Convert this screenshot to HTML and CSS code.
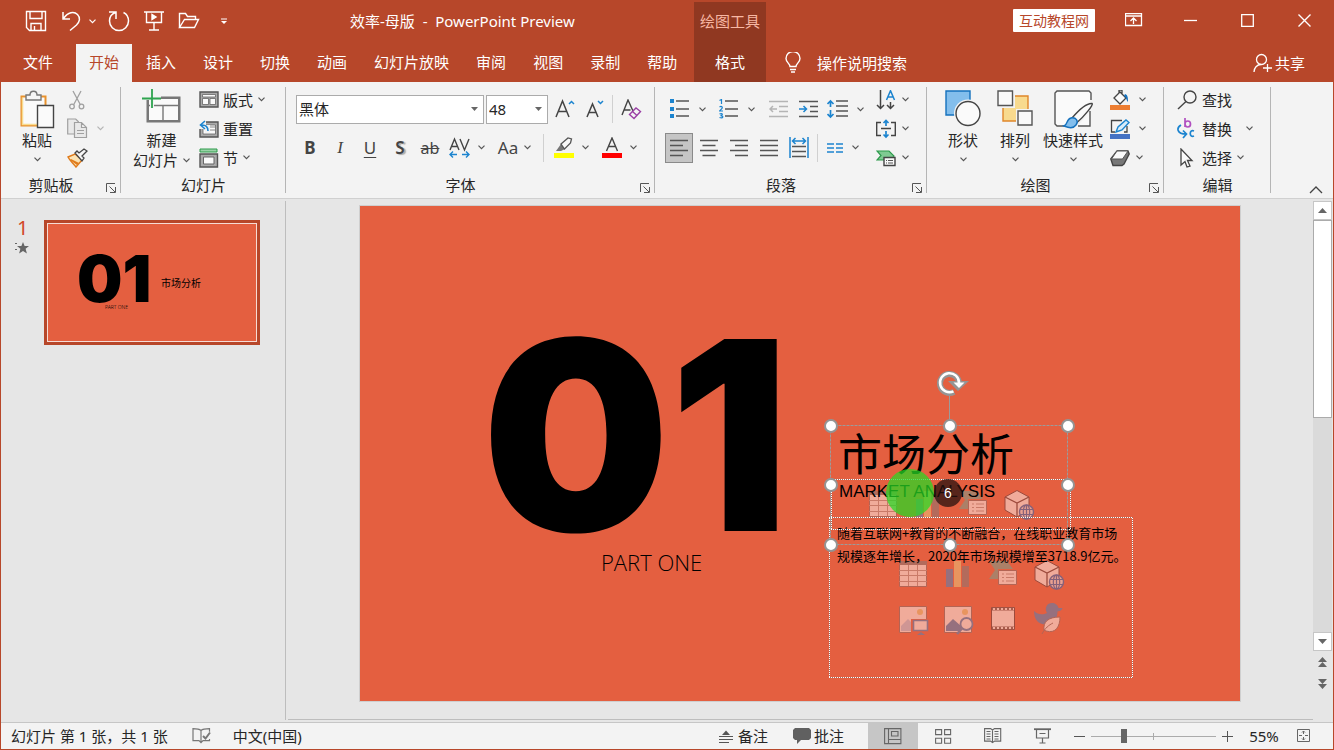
FILE: index.html
```html
<!DOCTYPE html>
<html lang="zh-CN">
<head>
<meta charset="utf-8">
<title>效率-母版 - PowerPoint Preview</title>
<link rel="stylesheet" href="styles.css">
</head>
<body>
<svg class="defs" aria-hidden="true">
  <symbol id="chev" viewBox="0 0 7 5"><path d="M.5 .7 3.5 3.7 6.5 .7" fill="none" stroke="currentColor" stroke-width="1.2"/></symbol>
  <symbol id="launch" viewBox="0 0 10 10"><path d="M.5 9V.5H9M3.5 3.5 9 9M9.5 4v5.5H4" fill="none" stroke="#555" stroke-width="1"/></symbol>
  <symbol id="content-icons" viewBox="0 0 165 30" overflow="visible">
    <path d="M.5 1.500h27v25h-27z" fill="#f0ab9a" stroke="#b36454"/>
    <path d="M0 1h28v4H0z" fill="#b36b5c"/>
    <path d="M0 10.500h28M0 15.500h28M0 21.500h28M9.500 5v21M18.500 5v21" stroke="#c97a68"/>
    <path d="M47 9h7v18h-7z" fill="#96707e"/><path d="M55 1h7v26h-7z" fill="#e8955f"/><path d="M63 6h7v21h-7z" fill="#b36b5c"/>
    <path d="M90 1h18l6 8H99v10h-9l6-9z" fill="#ab8068"/>
    <path d="M99.500 10.500h18v14h-18z" fill="#f0ab9a" stroke="#b36454"/>
    <path d="M103 14h2m2 0h8M103 17.500h2m2 0h8M103 21h2m2 0h8" stroke="#c97a68"/>
    <path d="M136 7 148 .5 160 7v13l-12 7-12-7z" fill="#f0ab9a" stroke="#9c4a3c"/>
    <path d="M136 7l12 6 12-6M148 13v14" fill="none" stroke="#9c4a3c" stroke-width="1.300"/>
    <circle cx="157.500" cy="22" r="7" fill="#e8a090" stroke="#86617a" stroke-width="1.400"/>
    <ellipse cx="157.500" cy="22" rx="3.200" ry="7" fill="none" stroke="#86617a" stroke-width="1.200"/>
    <path d="M157.500 15v14M151 19.500h13M151 24.500h13" stroke="#86617a" stroke-width="1.200"/>
  </symbol>
</svg>

<header class="header">
  <div class="header-main">
    <div class="title-row">
      <button class="btn" aria-label="保存"><svg width="22" height="22" fill="none" stroke="#fff" stroke-width="1.400"><path d="M1.500 1.500h19v19h-16l-3-3zM5 1.500v7h12v-7M6 20.500v-7h10v7M9.500 16v4"/></svg></button>
      <button class="btn undo" aria-label="撤消"><svg width="20" height="22" fill="none" stroke="#fff" stroke-width="1.500"><path d="M2 2v7h7M2.500 8.500C7 2 13 1 16.500 4.500s2 7.500-1 10.500L9 20.500"/></svg></button>
      <button class="btn undo-more" aria-label="撤消选项"><svg class="chev"><use href="#chev"/></svg></button>
      <button class="btn redo" aria-label="重复"><svg width="22" height="22" fill="none" stroke="#fff" stroke-width="1.500"><path d="M1 2h7v7M7.500 2.500C3 4 1.500 8 1.500 11a9.500 9.500 0 0 0 19 0c0-4-2-7-5-8.500"/></svg></button>
      <button class="btn present" aria-label="从头开始"><svg width="20" height="22" fill="none" stroke="#fff" stroke-width="1.400"><path d="M0 2h20M2.500 2v10.500h15V2M10 12.500v7M5 20h10"/><path d="M8 4.500v5l4-2.500z" fill="#fff"/></svg></button>
      <button class="btn open" aria-label="打开"><svg width="22" height="18" fill="none" stroke="#fff" stroke-width="1.400"><path d="M1.500 15.500V1.500h6l2 3h8v3M1.500 15.500l5-8h14l-4 8z"/></svg></button>
      <button class="btn custom" aria-label="自定义快速访问工具栏"><svg width="7" height="7"><path d="M0 1h6" stroke="#fff"/><path d="M0 3h6L3 6z" fill="#fff"/></svg></button>
      <h1 class="title">效率-母版&nbsp; -&nbsp; PowerPoint Preview</h1>
    </div>
    <nav class="tabs">
      <button class="tab tab-file">文件</button><button class="tab tab-on">开始</button><button class="tab">插入</button><button class="tab">设计</button><button class="tab">切换</button><button class="tab">动画</button><button class="tab">幻灯片放映</button><button class="tab">审阅</button><button class="tab">视图</button><button class="tab">录制</button><button class="tab">帮助</button>
    </nav>
  </div>
  <div class="context"><span class="context-name">绘图工具</span><button class="tab context-tab">格式</button></div>
  <div class="header-side">
    <div class="window-row">
      <span class="badge">互动教程网</span>
      <button class="win" aria-label="功能区显示选项"><svg width="18" height="14" fill="none" stroke="#fff"><path d="M.5 .5h16v12h-16zM.5 3h16M8.500 11V5M5.500 8l3-3 3 3" stroke-width="1.300"/></svg></button>
      <button class="win" aria-label="最小化"><svg width="13" height="13"><path d="M0 6.500h13" stroke="#fff" stroke-width="1.300"/></svg></button>
      <button class="win" aria-label="最大化"><svg width="13" height="13"><path d="M.7 .7h11.600v11.600H.7z" fill="none" stroke="#fff" stroke-width="1.300"/></svg></button>
      <button class="win" aria-label="关闭"><svg width="13" height="13"><path d="M.5 .5l12 12M12.500 .5l-12 12" stroke="#fff" stroke-width="1.400"/></svg></button>
    </div>
    <div class="search-row">
      <button class="btn tell"><svg width="16" height="22" fill="none" stroke="#fff" stroke-width="1.400"><path d="M5 14.500c0-3-4-4-4-8a7 7 0 0 1 14 0c0 4-4 5-4 8zM5 17.500h6M6 20h4"/></svg>操作说明搜索</button>
      <button class="btn share"><svg width="19" height="20" fill="none" stroke="#fff" stroke-width="1.300"><circle cx="8.500" cy="6.500" r="5"/><path d="M1 19c0-4 3-7.500 7-7.500M14.500 11v8M10 15h9"/></svg>共享</button>
    </div>
  </div>
</header>

<section class="ribbon">
  <div class="group g-clip">
    <div class="group-body">
      <button class="big"><svg width="36" height="40"><path d="M2.500 7.500h24v29h-24z" fill="#fafafa" stroke="#e8912d" stroke-width="2"/><path d="M3.500 8.500v27h22" fill="none" stroke="#f8db8f" stroke-width="1.500"/><path d="M7 11V6h4c0-5 7-5 7 0h4v5z" fill="#f6f6f6" stroke="#777" stroke-width="1.400"/><path d="M18.500 16.500h16v22h-16z" fill="#fafafa" stroke="#444" stroke-width="1.400"/></svg><span>粘贴</span><svg class="chev"><use href="#chev"/></svg></button>
      <div class="stack">
        <div class="line"><button class="btn" aria-label="剪切"><svg width="20" height="20" fill="none" stroke="#a0a0a0" stroke-width="1.300"><path d="M6 1l7.500 14M14 1 6.500 15"/><circle cx="5" cy="16.500" r="2.300"/><circle cx="14.500" cy="16.500" r="2.300"/></svg></button></div>
        <div class="line dim"><button class="btn" aria-label="复制"><svg width="21" height="21" fill="#e9e9e9" stroke="#a0a0a0" stroke-width="1.200"><path d="M7 16H.7V1h8l3 3"/><path d="M7.500 4.500h7l5 5v10h-12zM14.500 4.500v5h5M10 12.500h7M10 15.500h7"/></svg></button><button class="btn" aria-label="复制选项"><svg class="chev"><use href="#chev"/></svg></button></div>
        <div class="line"><button class="btn" aria-label="格式刷"><svg width="21" height="20"><path d="M1 9l7-3 7 6-6 7C6 15 3 13 1 9z" fill="#fbe3b4" stroke="#e07b1b" stroke-width="1.400"/><path d="M3 12l7 5 2-2-8-4z" fill="#e07b1b"/><path d="M8 5l2-2 2 2 5-4 3 2-5 5 2 2-2 3z" fill="#f6f6f6" stroke="#444" stroke-width="1.300"/></svg></button></div>
      </div>
    </div>
    <div class="group-title"><span>剪贴板</span><button class="launch" aria-label="剪贴板设置"><svg width="10" height="10"><use href="#launch"/></svg></button></div>
  </div>

  <div class="group g-slides">
    <div class="group-body">
      <button class="big"><svg width="40" height="40"><path d="M4.500 7.500h34v26h-34z" fill="#777"/><path d="M7 10h29v21H7z" fill="#fafafa"/><path d="M7 16.500h29M21 17v14" stroke="#777" stroke-width="1.400"/><path d="M0 9h19M10 0v19" stroke="#f3f3f3" stroke-width="4"/><path d="M0 9.500h19M10 0v19" stroke="#2ea44f" stroke-width="1.800"/></svg><span>新建</span><span class="with-chev">幻灯片<svg class="chev"><use href="#chev"/></svg></span></button>
      <div class="stack">
        <button class="line cmd"><svg width="20" height="17"><path d="M1 1h18v15H1z" fill="#aaa" stroke="#555" stroke-width="1.400"/><path d="M3.500 3.500h13v2.500h-13zM3.500 7.500h6v6h-6zM11 7.500h5.500v6H11z" fill="#fafafa" stroke="#666" stroke-width=".8"/></svg>版式<svg class="chev"><use href="#chev"/></svg></button>
        <button class="line cmd"><svg width="20" height="18"><path d="M3 2h16v15H1V9" fill="#aaa" stroke="#555" stroke-width="1.400"/><path d="M4 5h12.500v9H4z" fill="#fafafa" stroke="#666" stroke-width=".8"/><path d="M11 7h5M11 10h5" stroke="#888"/><path d="M0 0h7v5h4v8H6V9H0z" fill="#f3f3f3"/><path d="M6 1 1.500 5 6 9M2 5c5-.5 7 2 7 6" fill="none" stroke="#1c84cf" stroke-width="1.600"/></svg>重置</button>
        <button class="line cmd"><svg width="20" height="20"><path d="M1 1h17v3H1z" fill="#9bd3a8" stroke="#2c9a4b"/><path d="M1 6h17.500v13H1z" fill="#aaa" stroke="#555" stroke-width="1.400"/><path d="M4.500 9h10.500v7H4.500z" fill="#fafafa" stroke="#666"/></svg>节<svg class="chev"><use href="#chev"/></svg></button>
      </div>
    </div>
    <div class="group-title"><span>幻灯片</span></div>
  </div>

  <div class="group g-font">
    <div class="group-body rows">
      <div class="tool-row">
        <label class="combo combo-font"><select aria-label="字体"><option>黑体</option></select><svg width="7" height="4"><path d="M0 0h7L3.500 4z" fill="#666"/></svg></label>
        <label class="combo combo-size"><select aria-label="字号"><option>48</option></select><svg width="7" height="4"><path d="M0 0h7L3.500 4z" fill="#666"/></svg></label>
        <button class="tool" aria-label="增大字号"><svg width="20" height="20" fill="none" stroke="#444" stroke-width="1.500"><path d="M1 18 7.500 2 14 18M3.500 12.500h8"/><path d="M14 5l2.500-2.500L19 5" stroke="#1c84cf"/></svg></button>
        <button class="tool" aria-label="减小字号"><svg width="20" height="20" fill="none" stroke="#444" stroke-width="1.500"><path d="M2 18 7.500 5 13 18M4 13.500h7"/><path d="M13 2l2.500 2.500L18 2" stroke="#1c84cf"/></svg></button>
        <span class="sep"></span>
        <button class="tool clear" aria-label="清除格式"><svg width="21" height="21" fill="none" stroke="#444" stroke-width="1.400"><path d="M1 16 7 1l5 11M3.500 11h6"/><path d="M8.500 15.500 15 9l4.500 3.500L13 19.500z M11.500 12.500l4.500 4" fill="#f3f3f3" stroke="#9a3fa5"/></svg></button>
      </div>
      <div class="tool-row">
        <button class="tool fmt b">B</button><button class="tool fmt i">I</button><button class="tool fmt u">U</button><button class="tool fmt s">S</button><button class="tool fmt strike">ab</button>
        <button class="tool drop" aria-label="字符间距"><svg width="21" height="22" fill="none" stroke="#444" stroke-width="1.400"><path d="M1 13 5.500 2 10 13M2.500 9.500h6M11 2l4.500 11L20 2"/><path d="M1 17.500h7M4 14.500l-3 3 3 3M20 17.500h-7M17 14.500l3 3-3 3" stroke="#1c84cf"/></svg><svg class="chev"><use href="#chev"/></svg></button>
        <button class="tool drop case">Aa<svg class="chev"><use href="#chev"/></svg></button>
        <span class="sep"></span>
        <button class="tool drop mark" aria-label="突出显示颜色"><svg width="20" height="22"><path d="M0 16h20v5H0z" fill="#ff0"/><path d="M2 14l5-7 4 5-4 2z" fill="#777"/><path d="M7 7l7-6 3.500 1-1 4-6 6z" fill="#f8f8f8" stroke="#555" stroke-width="1.300"/></svg><svg class="chev"><use href="#chev"/></svg></button>
        <button class="tool drop color" aria-label="字体颜色"><svg width="20" height="22"><path d="M0 16h20v5H0z" fill="#f00"/><path d="M4.500 14 10 1l5.500 13M6.500 9.500h7" fill="none" stroke="#444" stroke-width="1.400"/></svg><svg class="chev"><use href="#chev"/></svg></button>
      </div>
    </div>
    <div class="group-title"><span>字体</span><button class="launch" aria-label="字体设置"><svg width="10" height="10"><use href="#launch"/></svg></button></div>
  </div>

  <div class="group g-para">
    <div class="group-body">
      <div class="rows">
        <div class="tool-row">
          <button class="tool drop" aria-label="项目符号"><svg width="20" height="20"><path d="M0 0h4v4H0zM0 8h4v4H0zM0 15h4v4H0z" fill="#1c84cf"/><path d="M6 2h13M6 10h13M6 17h13" stroke="#555" stroke-width="1.500"/></svg><svg class="chev"><use href="#chev"/></svg></button>
          <button class="tool drop" aria-label="编号"><svg width="20" height="20"><path d="M6 2h13M6 10h13M6 17h13" stroke="#555" stroke-width="1.500"/><path d="M.5 1.500 2.500 .5V5M.5 8C2 7 4 7.500 3 9.500L.5 12H4M.5 15c3-1.500 4 1 1 1.700 3.500 0 3 3-1 1.800" fill="none" stroke="#1c84cf" stroke-width="1.200"/></svg><svg class="chev"><use href="#chev"/></svg></button>
          <button class="tool" aria-label="减少缩进"><svg width="19" height="18" fill="none" stroke="#b4b4b4" stroke-width="1.500"><path d="M0 1.500h19M10 6.500h9M10 11.500h9M0 16.500h19M1 9h7M4 6 1 9l3 3"/></svg></button>
          <button class="tool" aria-label="增加缩进"><svg width="19" height="18" fill="none" stroke="#555" stroke-width="1.500"><path d="M0 1.500h19M11 6.500h8M11 11.500h8M0 16.500h19"/><path d="M0 9h7M4.500 6l3 3-3 3" stroke="#1c84cf"/></svg></button>
          <button class="tool drop" aria-label="行距"><svg width="21" height="20" fill="none" stroke="#555" stroke-width="1.500"><path d="M9 2h12M9 7h12M9 12h12M9 17h12"/><path d="M3.500 2v6M.5 5l3-3 3 3M3.500 11v7M.5 15l3 3 3-3" stroke="#1c84cf" stroke-width="1.700"/></svg><svg class="chev"><use href="#chev"/></svg></button>
        </div>
        <div class="tool-row">
          <button class="tool on" aria-label="左对齐"><svg width="18" height="18" stroke="#555" stroke-width="1.500"><path d="M0 1.500h18M0 6.500h13M0 11.500h18M0 16.500h13"/></svg></button>
          <button class="tool" aria-label="居中"><svg width="18" height="18" stroke="#555" stroke-width="1.500"><path d="M0 1.500h18M2.500 6.500h13M0 11.500h18M2.500 16.500h13"/></svg></button>
          <button class="tool" aria-label="右对齐"><svg width="18" height="18" stroke="#555" stroke-width="1.500"><path d="M0 1.500h18M5 6.500h13M0 11.500h18M5 16.500h13"/></svg></button>
          <button class="tool" aria-label="两端对齐"><svg width="18" height="18" stroke="#555" stroke-width="1.500"><path d="M0 1.500h18M0 6.500h18M0 11.500h18M0 16.500h18"/></svg></button>
          <button class="tool" aria-label="分散对齐"><svg width="20" height="21" fill="none" stroke="#555" stroke-width="1.500"><path d="M3 9.500h14M3 14.500h14M3 19.500h14"/><path d="M1 0v21M19 0v21M3.500 4h13M6.500 1l-3 3 3 3M13.500 1l3 3-3 3" stroke="#1c84cf"/></svg></button>
          <span class="sep"></span>
          <button class="tool drop cols" aria-label="分栏"><svg width="16" height="10" stroke="#1c84cf" stroke-width="1.500"><path d="M0 1h7M0 5h7M0 9h7M9 1h7M9 5h7M9 9h7"/></svg><svg class="chev"><use href="#chev"/></svg></button>
        </div>
      </div>
      <div class="stack">
        <button class="line cmd" aria-label="文字方向"><svg width="20" height="20" fill="none" stroke="#444" stroke-width="1.500"><path d="M4.500 0v18M1 15l3.500 3.500L8 15M14.500 12v6M11 15l3.500 3.500L18 15"/><path d="M10.500 10 14.500 .7 18.500 10M12 7h5" stroke="#1c84cf"/></svg><svg class="chev"><use href="#chev"/></svg></button>
        <button class="line cmd" aria-label="对齐文本"><svg width="20" height="20" fill="none" stroke="#444" stroke-width="1.400"><path d="M5 3.500H.7v13H5M15 3.500h4.300v13H15M5 9.500h10"/><path d="M10 1v6M7.500 4 10 1.500 12.500 4M10 12v6M7.500 15.500 10 18l2.500-2.500" stroke="#1c84cf" stroke-width="1.700"/></svg><svg class="chev"><use href="#chev"/></svg></button>
        <button class="line cmd" aria-label="转换为 SmartArt"><svg width="20" height="18"><path d="M1 2h12l5 5-3 4H1l4-4.500z" fill="#7fca92" stroke="#2c9a4b" stroke-width="1.200"/><path d="M8 8.500h11v8H8z" fill="#fafafa" stroke="#444" stroke-width="1.400"/><path d="M10 11.500h1m1 0h5M10 14h1m1 0h5" stroke="#555"/></svg><svg class="chev"><use href="#chev"/></svg></button>
      </div>
    </div>
    <div class="group-title"><span>段落</span><button class="launch" aria-label="段落设置"><svg width="10" height="10"><use href="#launch"/></svg></button></div>
  </div>

  <div class="group g-draw">
    <div class="group-body">
      <button class="big"><svg width="36" height="40"><path d="M1 2h24v24H1z" fill="#83beec" stroke="#1571bd" stroke-width="1.400"/><circle cx="23" cy="24.500" r="14" fill="#f3f3f3"/><circle cx="23" cy="24.500" r="12" fill="#fafafa" stroke="#444" stroke-width="1.400"/></svg><span>形状</span><svg class="chev"><use href="#chev"/></svg></button>
      <button class="big"><svg width="36" height="40"><path d="M6 7h25v25H6z" fill="#f8da8e" stroke="#e0862a" stroke-width="1.400"/><path d="M-1 0h19v19H-1zM19 20h18v18H19z" fill="#f3f3f3"/><path d="M1 2h14.500v14.500H1zM21 22h14v14H21z" fill="#fafafa" stroke="#555" stroke-width="1.400"/></svg><span>排列</span><svg class="chev"><use href="#chev"/></svg></button>
      <button class="big quick"><svg width="40" height="40"><path d="M12 37H4L2 35V4l2-2h32l2 2v7M37 22v15H25" fill="#fafafa" stroke="#555" stroke-width="1.400"/><path d="M19 29C25 22 33 14 39 14.500c2 1-8 13-15 19z" fill="#fafafa" stroke="#444" stroke-width="1.400"/><path d="M11 37c4-1 2-7 7-8s8 3 5 7-7 3-12 1z" fill="#83beec" stroke="#1571bd" stroke-width="1.400"/></svg><span>快速样式</span><svg class="chev"><use href="#chev"/></svg></button>
      <div class="stack">
        <button class="line cmd" aria-label="形状填充"><svg width="20" height="20"><path d="M0 15h20v5H0z" fill="#ed7d31"/><path d="M4 8l6-6 6 6-6 6zM9 4V0h3v5" fill="#fafafa" stroke="#444" stroke-width="1.300"/><path d="M15 4c3 1 3 4 3 8-2-2-1-4-4-6z" fill="#1571bd"/></svg><svg class="chev"><use href="#chev"/></svg></button>
        <button class="line cmd" aria-label="形状轮廓"><svg width="20" height="20"><path d="M0 15h20v5H0z" fill="#4472c4"/><path d="M12 1.500H1.500V13H5M17 7v6h-3" fill="none" stroke="#444" stroke-width="1.300"/><path d="M6 13l2-5 8-7 3 2.500-7 7.500z" fill="#d8ecfa" stroke="#1c84cf" stroke-width="1.400"/></svg><svg class="chev"><use href="#chev"/></svg></button>
        <button class="line cmd near" aria-label="形状效果"><svg width="20" height="18"><path d="M.8 10 7 2h11l1.200 3-5.200 10-2 1.500H3z" fill="#777" stroke="#444" stroke-width="1.400"/><path d="M1.500 10l5.500-8h11l-5.500 8z" fill="#fafafa" stroke="#555"/></svg><svg class="chev"><use href="#chev"/></svg></button>
      </div>
    </div>
    <div class="group-title"><span>绘图</span><button class="launch" aria-label="绘图设置"><svg width="10" height="10"><use href="#launch"/></svg></button></div>
  </div>

  <div class="group g-edit">
    <div class="group-body">
      <div class="stack">
        <button class="line cmd"><svg width="22" height="20" fill="none" stroke="#444" stroke-width="1.400"><circle cx="14" cy="7" r="6"/><path d="M10 11.500 2 19"/></svg>查找</button>
        <button class="line cmd wide"><svg width="22" height="21" fill="none" stroke="#1c84cf" stroke-width="1.700"><path d="M5 7c-5 3-4 9 5 9M7 12.500l3.500 3.500L7 20"/><path d="M9 0v9M9 6c0-4 5.500-4 5.500 0s-5.500 4-5.500 0" stroke="#b04fc0"/><path d="M18 13c-5-2-5 7 0 5"/></svg>替换<svg class="chev"><use href="#chev"/></svg></button>
        <button class="line cmd"><svg width="22" height="20"><path d="M5 1v16l4-3.500 2 5.500 3-1-2.500-5.500H16z" fill="#fafafa" stroke="#444" stroke-width="1.300"/></svg>选择<svg class="chev"><use href="#chev"/></svg></button>
      </div>
    </div>
    <div class="group-title"><span>编辑</span></div>
  </div>
  <button class="collapse" aria-label="折叠功能区"><svg width="14" height="8"><path d="M1 7l6-6 6 6" fill="none" stroke="#444" stroke-width="1.300"/></svg></button>
</section>

<main class="work">
  <aside class="slides">
    <div class="slide-info"><span class="slide-no">1</span><svg width="14" height="12" fill="#666"><path d="M8 0l1.600 4H14l-3.400 2.700 1.300 4.800L8 9l-3.900 2.500 1.300-4.800L2 4h4.400zM0 1h2v1H0zM0 7h2v1H0z"/></svg></div>
    <button class="thumb" aria-label="幻灯片 1">
      <span class="thumb-num">01</span><span class="thumb-part">PART ONE</span><span class="thumb-title">市场分析</span>
    </button>
  </aside>
  <section class="stage">
    <article class="slide">
      <svg class="layer" viewBox="360 206 880 495">
        <use href="#content-icons" x="869" y="490" width="165" height="30"/>
        <use href="#content-icons" x="899" y="560" width="165" height="30"/>
        <path d="M899.500 606.500h27v26h-27zM944.500 606.500h27v26h-27z" fill="#f0ab9a" stroke="#b36454"/>
        <circle cx="920" cy="612" r="3" fill="#e8955f"/><circle cx="965" cy="612" r="3" fill="#e8955f"/>
        <path d="M901 631v-5l7-7 6 6v6z" fill="#cf9694"/><path d="M946 631v-5l7-7 8 7v5z" fill="#96707e"/>
        <path d="M911 619h18v14h-18z" fill="#e45f40"/><path d="M913.500 620.500h14v10h-14z" fill="#f0ab9a" stroke="#96707e" stroke-width="1.600"/><path d="M917 635l4-3 4 3z" fill="#96707e"/>
        <circle cx="966.500" cy="624" r="6" fill="#f0ab9a" stroke="#96707e" stroke-width="1.800"/><path d="M962 628.500l-5 5.500" stroke="#96707e" stroke-width="2.500"/>
        <path d="M991.500 607.500h23v22h-23z" fill="#f0ab9a" stroke="#9c4a3c"/><path d="M992 609h22M992 628h22" stroke="#a85b4b" stroke-width="3"/><path d="M993 609h21M993 628h21" stroke="#f0ab9a" stroke-width="2" stroke-dasharray="2 2"/>
        <path d="M1034 611c4 4 9 4 13 2-3-5 0-10 5-10 3 0 6 2 6.500 5h4c-.5 2.500-2.500 3-5 3.500 0 6-3 13-12 13-7 0-11.500-5-11.500-13.500z" fill="#96707e"/>
        <path d="M1044 630c-1-8 4-13 16-13 0 9-4 17-14 14z" fill="#f0ab9a" stroke="#b36454"/><path d="M1042 634c3-6 7-9 11-11" fill="none" stroke="#b36454"/>
      </svg>
      <p class="big-number">01</p>
      <p class="part">PART ONE</p>
      <h2 class="heading">市场分析</h2>
      <p class="sub">MARKET ANALYSIS</p>
      <p class="copy">随着互联网+教育的不断融合，在线职业教育市场<br>规模逐年增长，2020年市场规模增至3718.9亿元。</p>
      <svg class="layer" viewBox="360 206 880 495" fill="none">
        <g stroke="#777" stroke-opacity=".6"><path d="M831.500 479.500h239v50h-239zM829.500 517.500h303v160h-303z"/></g>
        <g stroke="#fff" stroke-dasharray="1 1"><path d="M831 479.500h240M831 529.500h240M829 517.500h304M829 677.500h304M831.500 480v49M1070.500 480v49M829.500 518v159M1132.500 518v159"/></g>
        <path d="M830.500 425.500h237v119h-237z" stroke="#9b9b9b" stroke-dasharray="3 1"/>
        <path d="M949.500 396v24" stroke="#9b9b9b"/>
        <g fill="#fff" stroke="#949494" stroke-width="2"><circle cx="831" cy="426" r="6"/><circle cx="950" cy="426" r="6"/><circle cx="1068" cy="426" r="6"/><circle cx="831" cy="485" r="6"/><circle cx="1068" cy="485" r="6"/><circle cx="831" cy="545" r="6"/><circle cx="950" cy="545" r="6"/><circle cx="1068" cy="545" r="6"/></g>
        <path d="M954 391.800a9.500 9.500 0 1 1 5-8.300" stroke="#949494" stroke-width="6"/>
        <path d="M948 381h21l-11 10z" fill="#949494"/>
        <path d="M953.500 391.300a9.500 9.500 0 1 1 5.500-8.300" stroke="#fff" stroke-width="2.500"/>
        <path d="M953.500 382.500h11l-5.500 5.500z" fill="#fff"/>
        <circle cx="910" cy="493" r="24" fill="#27da24" fill-opacity=".73"/>
        <circle cx="948" cy="493" r="14" fill="#28120f" fill-opacity=".75"/>
      </svg>
      <span class="count">6</span>
    </article>
  </section>
  <div class="scroll">
    <button class="scroll-btn" aria-label="向上滚动"><svg width="9" height="5"><path d="M0 5 4.500 0 9 5z" fill="#666"/></svg></button>
    <div class="scroll-track"><div class="scroll-thumb"></div></div>
    <button class="scroll-btn" aria-label="向下滚动"><svg width="9" height="5"><path d="M0 0h9L4.500 5z" fill="#666"/></svg></button>
    <button class="jump" aria-label="上一张幻灯片"><svg width="9" height="10"><path d="M0 5 4.500 0 9 5zM0 10l4.500-5L9 10z" fill="#666"/></svg></button>
    <button class="jump" aria-label="下一张幻灯片"><svg width="9" height="10"><path d="M0 0h9L4.500 5zM0 5h9l-4.500 5z" fill="#666"/></svg></button>
  </div>
</main>

<footer class="status">
  <span>幻灯片 第 1 张，共 1 张</span>
  <button class="btn proof" aria-label="拼写检查"><svg width="19" height="16" fill="none" stroke="#777" stroke-width="1.200"><path d="M9 2.500C7 .7 4 .7 1 .7v12h6l2 2 2-2h6.500V11M9 2.500C11 .7 14 .7 17.500 .7v3M9 2.500V14"/><path d="M11 8l2.500 2.500L18 4.500" stroke-width="2"/></svg></button>
  <button class="btn">中文(中国)</button>
  <div class="status-right">
    <button class="btn note"><svg width="14" height="13" stroke="#555" stroke-width="1.200"><path d="M3 5 7 .5 11 5z" fill="#555" stroke="none"/><path d="M0 6.500h14M0 9.500h14M0 12.500h10"/></svg>备注</button>
    <button class="btn comment"><svg width="18" height="16"><path d="M2 0h14l2 2v8l-2 2H8l-4 4v-4H2l-2-2V2z" fill="#606060"/></svg>批注</button>
    <button class="view view-on" aria-label="普通视图"><svg width="18" height="17" fill="none" stroke="#666" stroke-width="1.100"><path d="M.6 .6h16.300v15H.6zM4.500 .6v15M4.500 11.500h12.400M7.500 3.500h6.500v4.500H7.500z"/></svg></button>
    <button class="view" aria-label="幻灯片浏览"><svg width="17" height="15" fill="none" stroke="#666" stroke-width="1.100"><path d="M.6 .6h6v5h-6zM9.600 .6h6v5h-6zM.6 9.200h6v5h-6zM9.600 9.200h6v5h-6z"/></svg></button>
    <button class="view" aria-label="阅读视图"><svg width="18" height="16" fill="none" stroke="#666" stroke-width="1.100"><path d="M.6 .6h6L8.500 2l2-1.400h6.200v12.500h-6L8.500 14.500l-2-1.400H.6zM8.500 2v13M2.500 3.500h4M2.500 6h4M2.500 8.500h4M2.500 11h4M10.500 3.500h4M10.500 6h4M10.500 8.500h4M10.500 11h4"/></svg></button>
    <button class="view" aria-label="幻灯片放映"><svg width="18" height="16" fill="none" stroke="#666" stroke-width="1.200"><path d="M0 1.200h17" stroke-width="1.800"/><path d="M2.500 2v8h12V2M5.500 5.500h6M8.500 10v5M5.500 15h6"/></svg></button>
    <button class="zoom" aria-label="缩小"><svg width="11" height="11"><path d="M0 5.500h11" stroke="#555"/></svg></button>
    <input class="slider" type="range" min="10" max="190" value="55" aria-label="显示比例">
    <button class="zoom" aria-label="放大"><svg width="11" height="11"><path d="M0 5.500h11M5.500 0v11" stroke="#555"/></svg></button>
    <button class="btn percent">55%</button>
    <button class="btn fit" aria-label="适应窗口"><svg width="14" height="14" fill="none" stroke="#666"><path d="M.5 .5h12v12H.5zM6.500 2v3M6.500 8v3M2 6.500h3M8 6.500h3M5 3.500l1.500-1.500L8 3.500M5 9.500l1.500 1.500L8 9.500"/></svg></button>
  </div>
</footer>
</body>
</html>
```
FILE: styles.css
```css
* { box-sizing: border-box; }
body {
  margin: 0;
  min-height: 100vh;
  display: flex;
  flex-direction: column;
  font: 15px/20px "Noto Sans", "Noto Sans CJK SC", sans-serif;
  color: #262626;
  background: #e6e6e6;
  border: 1px solid #b7472a;
  border-top: 0;
}
button {
  border: 0;
  padding: 0;
  background: none;
  color: inherit;
  font: inherit;
  white-space: nowrap;
}
h1, h2, p { margin: 0; font-weight: 400; }
svg { display: block; flex: none; }
.defs { position: absolute; width: 0; height: 0; }
.chev { width: 7px; height: 5px; color: #555; }

/* Title bar and tabs */
.header { display: flex; background: #b7472a; color: #fff; }
.header-main { width: 693px; flex: none; }
.title-row { height: 44px; padding: 0 0 2px 24px; display: flex; align-items: center; }
.undo { margin-left: 14px; }
.undo-more { margin-left: 8px; }
.undo-more .chev { color: #fff; }
.redo { margin-left: 12px; }
.present { margin-left: 14px; }
.open { margin-left: 14px; }
.custom { margin-left: 21px; }
.title { margin-left: 122px; font-size: 15px; white-space: nowrap; }
.tabs { display: flex; gap: 1px; height: 38px; padding-left: 9px; }
.tab { padding: 0 13px 2px; height: 38px; }
.tab-file { margin-right: 9px; }
.tab-on { background: #f3f3f3; color: #b7472a; }
.context {
  width: 72px;
  flex: none;
  margin-top: 2px;
  display: flex;
  flex-direction: column;
  align-items: center;
  justify-content: space-between;
  background: #903821;
}
.context-name { color: #f7b7a3; line-height: 38px; }
.header-side { flex: 1; }
.window-row { height: 44px; padding-bottom: 4px; display: flex; align-items: center; justify-content: flex-end; }
.badge {
  margin-right: 10px;
  padding: 0 6px;
  border-radius: 1px;
  background: #fff;
  color: #b7472a;
  font-size: 14px;
  line-height: 23px;
}
.win { width: 57px; height: 40px; display: grid; place-items: center; }
.search-row { height: 38px; padding: 0 28px 0 19px; display: flex; align-items: center; justify-content: space-between; }
.tell { display: flex; align-items: center; gap: 16px; }
.share { display: flex; align-items: center; gap: 3px; }

/* Ribbon */
.ribbon { display: flex; height: 117px; background: #f3f3f3; border-bottom: 1px solid #d0d0d0; }
.group {
  flex: none;
  padding-top: 3px;
  background: linear-gradient(#b5b5b5, #b5b5b5) right center / 1px 106px no-repeat;
}
.group-body { display: flex; height: 86px; }
.group-title { display: flex; align-items: center; height: 26px; padding-top: 2px; }
.group-title span { flex: 1; text-align: center; }
.launch { width: 20px; height: 20px; padding: 5px 0 0 5px; }
.g-clip { width: 120px; }
.g-slides { width: 165px; }
.g-font { width: 369px; }
.g-para { width: 272px; }
.g-draw { width: 237px; }
.g-edit { width: 107px; }
.big { width: 52px; padding-top: 4px; display: flex; flex-direction: column; align-items: center; }
.big > svg:first-child { margin-bottom: 1px; }
.big > .chev { margin-top: 7px; }
.big span { line-height: 20px; }
.with-chev { display: flex; align-items: center; gap: 5px; }
.stack { display: flex; flex-direction: column; }
.line { height: 29px; display: flex; align-items: center; gap: 5px; flex: none; }
.cmd .chev { margin-left: 1px; }
.g-clip .group-body { padding-left: 10px; }
.g-clip .stack { padding-left: 4px; }
.g-clip .line { gap: 9px; }
.dim .chev { color: #b4b4b4; }
.g-slides .group-body { padding-left: 12px; gap: 9px; }
.g-slides .big { width: 57px; }
.g-slides .line { gap: 4px; }
.rows { flex-direction: column; }
.tool-row { display: flex; align-items: center; height: 39px; }
.rows .tool-row:first-child { padding-top: 5px; height: 43px; }
.tool { width: 30px; height: 30px; display: flex; align-items: center; justify-content: center; }
.sep { width: 1px; height: 28px; background: #d0d0d0; }
.g-font .group-body { padding-left: 9px; }
.combo { display: grid; align-items: center; margin-left: 1px; height: 29px; background: #fff; border: 1px solid #ababab; }
.combo select, .combo svg { grid-area: 1 / 1; }
.combo svg { justify-self: end; margin-right: 5px; pointer-events: none; }
.combo select { appearance: none; width: 100%; height: 27px; padding: 0 2px; border: 0; background: transparent; color: #262626; font: inherit; }
.combo-font { width: 188px; }
.combo-size { width: 62px; margin-left: 2px; margin-right: 2px; }
.g-font .sep { margin-left: 2px; }
.clear { margin-left: 3px; }
.fmt { font-size: 17px; color: #444; }
.b { font-weight: 700; }
.i { font-family: "Liberation Serif", serif; font-style: italic; }
.u { text-decoration: underline; text-underline-offset: 3px; }
.s { font-weight: 600; text-shadow: 2px 1px 1px #aaa; }
.strike { text-decoration: line-through; font-size: 16px; }
.drop { width: 43px; gap: 8px; }
.case { width: 47px; gap: 6px; margin: 0 3px; font-size: 17px; color: #444; }
.mark { margin-left: 6px; }
.g-font .color { margin-left: 5px; }
.g-para .group-body { padding-left: 10px; }
.g-para .rows { width: 211px; }
.g-para .drop { width: 49px; gap: 9px; padding-right: 4px; }
.g-para .cols { width: 49px; padding-right: 0; }
.g-para .on { width: 28px; margin-right: 1px; background: #c5c5c5; border: 1px solid #8a8a8a; }
.g-para .sep { margin-left: 3px; }
.g-draw .group-body { padding-left: 10px; }
.g-draw .quick { width: 64px; }
.g-draw .stack { padding-left: 5px; }
.g-draw .line { gap: 8px; }
.g-draw .near { gap: 5px; }
.g-edit .group-body { padding-left: 12px; }
.g-edit .line { gap: 4px; }
.wide .chev { margin-left: 10px; }
.collapse { margin: auto 10px 4px auto; }

/* Workspace */
.work { flex: 1; display: flex; padding: 2px 0; }
.slides { width: 285px; flex: none; display: flex; padding: 19px 0 0 14px; border-right: 1px solid #bdbdbd; }
.slide-info { width: 29px; color: #d24726; font-size: 20px; line-height: 16px; }
.slide-no { display: block; padding: 0 0 6px 2px; }
.thumb { position: relative; width: 216px; height: 125px; border: 3px solid #b7472a; outline: 1px solid #f6dcd5; outline-offset: -4px; background: #e45f40; color: #000; }
.thumb-num, .thumb-part, .thumb-title { position: absolute; }
.thumb-num { left: 30px; top: 34px; font: 900 64px/44px Inter, sans-serif; }
.thumb-part { left: 58px; top: 80px; font-size: 5px; line-height: 8px; font-weight: 300; }
.thumb-title { left: 114px; top: 53px; font-size: 10px; line-height: 14px; }
.stage { flex: 1; display: grid; justify-content: center; align-content: start; margin-left: 2px; padding: 5px 1px 0 0; border-bottom: 1px solid #bdbdbd; }
.slide { position: relative; width: 880px; aspect-ratio: 16 / 9; background: #e45f40; color: #000; outline: 1px solid #cfcfcf; }
.layer { position: absolute; inset: 0; width: 100%; height: 100%; }
.big-number, .part, .heading, .sub, .copy, .count { position: absolute; white-space: nowrap; }
.big-number { left: 122px; top: 129px; font: 900 264px/200px Inter, sans-serif; }
.part { left: 241px; top: 343px; font: 300 22px/26px "Open Sans", sans-serif; }
.heading { left: 478px; top: 221px; font: 400 44px/50px "Noto Sans CJK SC", sans-serif; }
.sub { left: 479px; top: 276px; font: 17px/20px "Liberation Sans", sans-serif; }
.copy { left: 477px; top: 315px; font: 13px/23px "Noto Sans CJK SC", sans-serif; }
.count { left: 582px; top: 277px; width: 12px; color: #fff; font: 14px/20px "Liberation Sans", sans-serif; text-align: center; }
.scroll { width: 19px; margin-right: 1px; display: flex; flex-direction: column; }
.scroll-btn { height: 19px; background: #fff; border: 1px solid #c6c6c6; display: grid; place-items: center; }
.scroll-track { flex: 1; background: #dadada; }
.scroll-thumb { height: 198px; background: #fff; border: 1px solid #ababab; }
.jump { height: 22px; display: grid; place-items: center; }
.scroll .jump:last-child { margin-bottom: 25px; }

/* Status bar */
.status { height: 27px; padding: 0 22px 0 10px; display: flex; align-items: center; background: #f3f3f3; border-top: 1px solid #c6c6c6; white-space: nowrap; }
.proof { margin: 0 22px 0 24px; }
.status-right { display: flex; align-items: center; margin-left: auto; align-self: stretch; }
.note, .comment { display: flex; align-items: center; gap: 5px; }
.comment { margin: 0 24px 0 25px; gap: 3px; }
.view { width: 50px; align-self: stretch; display: grid; place-items: center; }
.view-on { background: #c6c6c6; }
.zoom { width: 23px; height: 20px; display: grid; place-items: center; }
.slider {
  appearance: none;
  width: 125px;
  height: 14px;
  margin: 0;
  background:
    linear-gradient(#ababab, #ababab) center / 100% 1px no-repeat,
    linear-gradient(#ababab, #ababab) center / 1px 7px no-repeat;
}
.slider::-webkit-slider-thumb { appearance: none; width: 6px; height: 14px; background: #666; }
.percent { width: 32px; margin: 0 17px 0 9px; }
```
